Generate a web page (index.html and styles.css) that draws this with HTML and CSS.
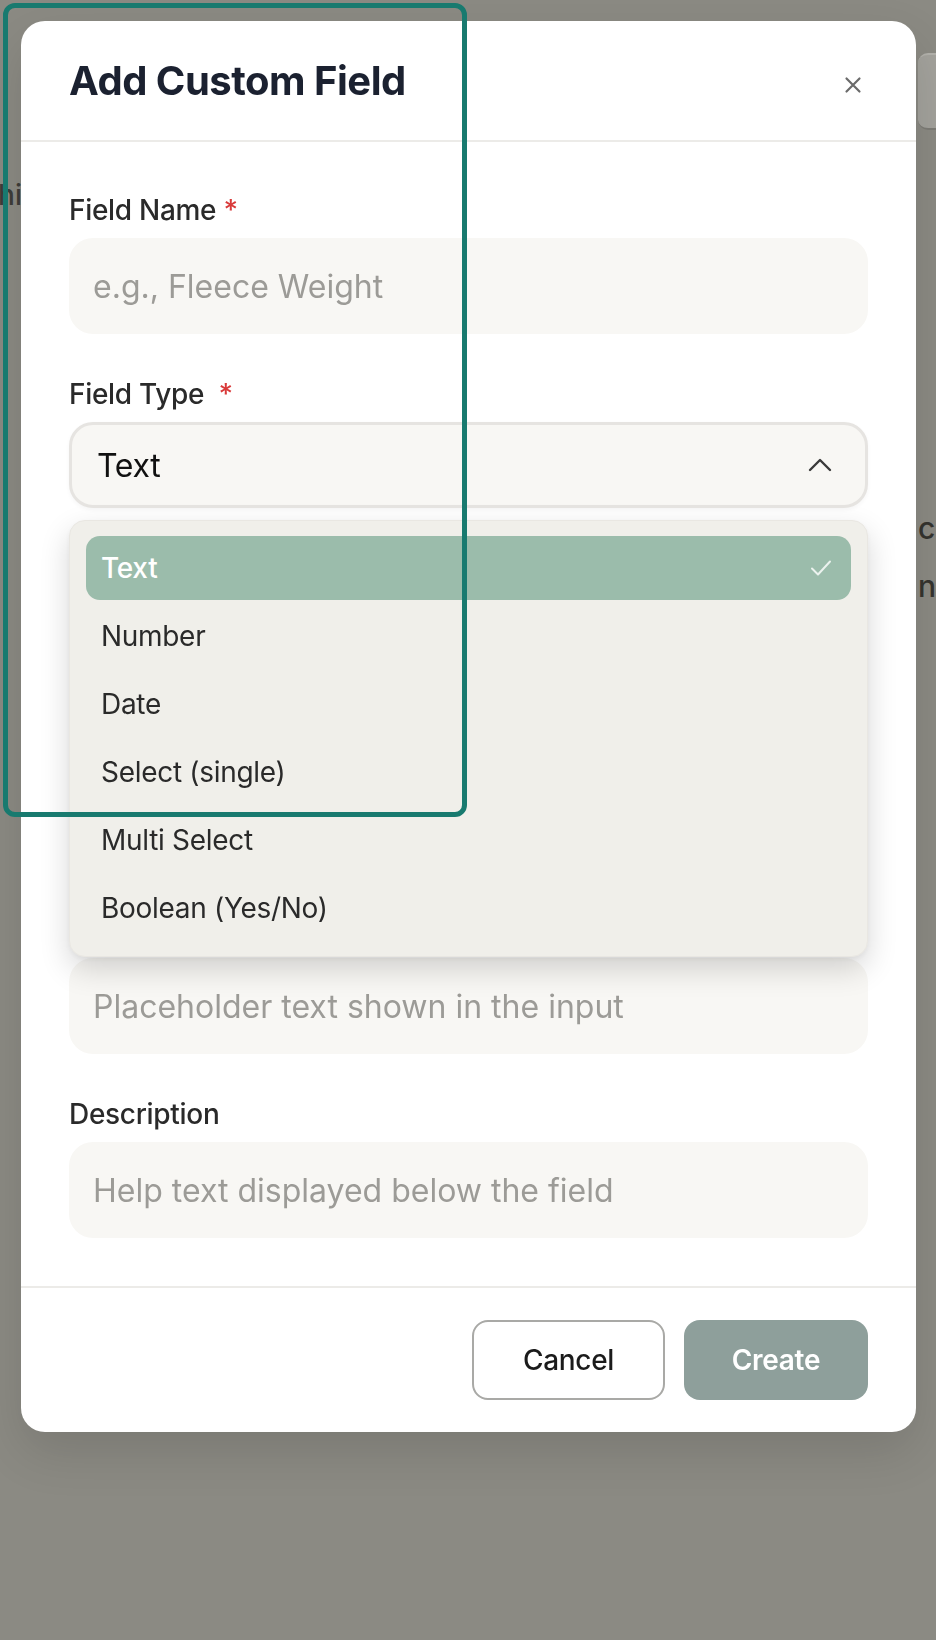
FILE: index.html
```html
<!DOCTYPE html>
<html lang="en">
<head>
<meta charset="utf-8">
<title>Add Custom Field</title>
<link rel="stylesheet" href="styles.css">
</head>
<body>
<div class="page">
  <div class="page-left"><span class="ghost-text">Machi</span></div>
  <div class="page-center"></div>
  <div class="page-right">
    <div class="ghost-btn"></div>
    <div class="ghost-line first">c.</div>
    <div class="ghost-line">ns</div>
  </div>
</div>

<div class="backdrop"></div>

<div class="modal" role="dialog" aria-labelledby="modal-title">
  <header class="modal-header">
    <h2 id="modal-title" class="modal-title">Add Custom Field</h2>
    <button class="close-btn" aria-label="Close">
      <svg width="20" height="20" viewBox="0 0 20 20" fill="none" stroke="currentColor" stroke-width="2.2" stroke-linecap="round"><path d="M3.5 3.5l13 13M16.5 3.5l-13 13"/></svg>
    </button>
  </header>

  <div class="modal-body">
    <div class="group">
      <label class="label">Field Name <span class="req">*</span></label>
      <div class="input placeholder">e.g., Fleece Weight</div>
    </div>

    <div class="group select-group">
      <label class="label">Field Type &nbsp;<span class="req">*</span></label>
      <div class="select">
        <span class="select-value">Text</span>
        <svg class="chevron" width="24" height="14" viewBox="0 0 24 14" fill="none" stroke="currentColor" stroke-width="2.4" stroke-linecap="round" stroke-linejoin="round"><path d="M2 12L12 2l10 10"/></svg>
      </div>
      <ul class="dropdown" role="listbox">
        <li class="option selected">Text
          <svg class="check" width="22" height="18" viewBox="0 0 22 18" fill="none" stroke="currentColor" stroke-width="2" stroke-linecap="round" stroke-linejoin="round"><path d="M2 9.5l6 6L20 2.5"/></svg>
        </li>
        <li class="option">Number</li>
        <li class="option">Date</li>
        <li class="option">Select (single)</li>
        <li class="option">Multi Select</li>
        <li class="option">Boolean (Yes/No)</li>
      </ul>
    </div>

    <div class="group">
      <label class="label">Default Value</label>
      <div class="input placeholder">Default value</div>
    </div>

    <div class="toggle-row">
      <span class="label">Required</span>
    </div>

    <div class="group">
      <label class="label">Placeholder</label>
      <div class="input placeholder">Placeholder text shown in the input</div>
    </div>

    <div class="group">
      <label class="label">Description</label>
      <div class="input placeholder">Help text displayed below the field</div>
    </div>
  </div>

  <footer class="modal-footer">
    <button class="btn btn-cancel">Cancel</button>
    <button class="btn btn-create">Create</button>
  </footer>
</div>

<div class="highlight"></div>
</body>
</html>
```

FILE: styles.css
```css
* { box-sizing: border-box; }

html, body {
  margin: 0;
  padding: 0;
  width: 936px;
  height: 1640px;
  overflow: hidden;
}

body {
  font-family: Inter, "Noto Sans", "Liberation Sans", sans-serif;
  background: #8b8a83;
  color: #222;
}

/* background page (dimmed) */
.page {
  display: flex;
  height: 1640px;
}
.page-left {
  width: 22px;
  overflow: hidden;
  display: flex;
  justify-content: flex-end;
  padding-top: 178px;
}
.ghost-text {
  font-size: 28px;
  font-weight: 500;
  color: #3e3d39;
  white-space: nowrap;
}
.page-center { flex: 1; }
.page-right {
  width: 18px;
  overflow: hidden;
  padding-top: 53px;
}
.ghost-btn {
  height: 77px;
  background: #a3a29c;
  border-top: 2px solid #b2b1ab;
  border-bottom: 2px solid #7d7c76;
  border-radius: 10px 0 0 10px;
}
.ghost-line {
  font-size: 30px;
  font-weight: 500;
  color: #35342f;
  white-space: nowrap;
  line-height: 40px;
  margin-top: 18px;
}
.ghost-line.first { margin-top: 378px; }

.backdrop {
  position: fixed;
  inset: 0;
  pointer-events: none;
}

/* modal */
.modal {
  position: fixed;
  left: 21px;
  top: 21px;
  width: 895px;
  background: #ffffff;
  border-radius: 24px;
  box-shadow: 0 20px 50px rgba(0,0,0,0.12);
}

.modal-header {
  display: flex;
  align-items: center;
  justify-content: space-between;
  padding: 32px 46px 31px 48px;
  border-bottom: 2px solid #ecebe8;
}
.modal-title {
  margin: 0;
  font-size: 40px;
  line-height: 56px;
  font-weight: 700;
  letter-spacing: -0.5px;
  color: #1b2130;
}
.close-btn {
  width: 34px;
  height: 34px;
  margin-top: 8px;
  padding: 0;
  border: 0;
  background: transparent;
  color: #6b6b6b;
  display: flex;
  align-items: center;
  justify-content: center;
}

.modal-body {
  padding: 48px 48px 48px 48px;
  display: flex;
  flex-direction: column;
  gap: 40px;
}

.group {
  display: flex;
  flex-direction: column;
  gap: 8px;
}
.select-group { position: relative; }

.label {
  font-size: 28px;
  line-height: 40px;
  font-weight: 500;
  color: #2a2a2a;
  letter-spacing: -0.3px;
}
.req { color: #d93a3a; }

.input {
  height: 96px;
  border-radius: 24px;
  background: #f8f7f4;
  padding: 0 24px;
  display: flex;
  align-items: center;
  font-size: 32px;
}
.placeholder { color: #9c9b97; }

.select {
  height: 86px;
  border-radius: 24px;
  background: #f8f7f4;
  border: 3px solid #e6e4e1;
  padding: 0 33px 0 25px;
  display: flex;
  align-items: center;
  justify-content: space-between;
  box-shadow: 0 2px 4px rgba(0,0,0,0.04);
}
.select-value {
  font-size: 32px;
  color: #111;
  letter-spacing: -0.3px;
}
.chevron { color: #3a3a3a; }

.dropdown {
  position: absolute;
  left: 0;
  right: 0;
  top: 146px;
  z-index: 5;
  margin: 0;
  list-style: none;
  padding: 15px 16px 16px;
  background: #f0efea;
  border: 1px solid #e9e7e2;
  border-radius: 16px;
  box-shadow: 0 12px 30px rgba(0,0,0,0.16), 0 2px 6px rgba(0,0,0,0.05);
  display: flex;
  flex-direction: column;
  gap: 4px;
}
.option {
  height: 64px;
  border-radius: 14px;
  padding: 0 19px 0 15px;
  display: flex;
  align-items: center;
  justify-content: space-between;
  font-size: 28px;
  color: #2a2a2a;
  letter-spacing: -0.3px;
}
.option.selected {
  background: #9bbcab;
  color: #ffffff;
  font-weight: 500;
}
.check { color: rgba(255,255,255,0.8); }

.toggle-row {
  height: 138px;
  border-radius: 24px;
  background: #f8f7f4;
  padding: 0 24px;
  display: flex;
  align-items: center;
}

.modal-footer {
  border-top: 2px solid #ecebe8;
  padding: 32px 48px 32px;
  display: flex;
  justify-content: flex-end;
  gap: 19px;
}
.btn {
  height: 80px;
  border-radius: 16px;
  font-family: inherit;
  font-size: 28px;
  font-weight: 500;
  letter-spacing: -0.3px;
}
.btn-cancel {
  width: 193px;
  background: #ffffff;
  border: 2px solid #a9a9a6;
  color: #1b1b1b;
}
.btn-create {
  width: 184px;
  background: #8e9f9b;
  border: 0;
  color: #ffffff;
  font-weight: 600;
}

/* annotation highlight box */
.highlight {
  position: fixed;
  left: 3px;
  top: 3px;
  width: 464px;
  height: 814px;
  border: 5px solid #187a6f;
  border-radius: 12px;
  pointer-events: none;
  z-index: 10;
}
```
